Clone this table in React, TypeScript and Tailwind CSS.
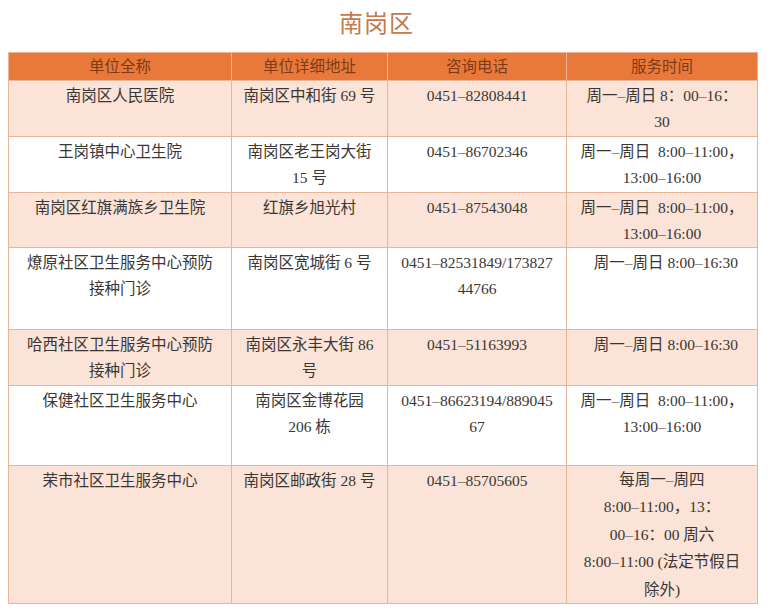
import React from "react";

type Row = { name: string[]; addr: string[]; phone: string[]; time: string[]; h: string; shade: boolean };

const rows: Row[] = [
  { name: ["南岗区人民医院"], addr: ["南岗区中和街 69 号"], phone: ["0451–82808441"], time: ["周一–周日 8：00–16：", "30"], h: "h-[56px]", shade: true },
  { name: ["王岗镇中心卫生院"], addr: ["南岗区老王岗大街", "15 号"], phone: ["0451–86702346"], time: ["周一–周日  8:00–11:00，", "13:00–16:00"], h: "h-[56px]", shade: false },
  { name: ["南岗区红旗满族乡卫生院"], addr: ["红旗乡旭光村"], phone: ["0451–87543048"], time: ["周一–周日  8:00–11:00，", "13:00–16:00"], h: "h-[55px]", shade: true },
  { name: ["燎原社区卫生服务中心预防", "接种门诊"], addr: ["南岗区宽城街 6 号"], phone: ["0451–82531849/173827", "44766"], time: ["  周一–周日 8:00–16:30"], h: "h-[82px]", shade: false },
  { name: ["哈西社区卫生服务中心预防", "接种门诊"], addr: ["南岗区永丰大街 86", "号"], phone: ["0451–51163993"], time: ["  周一–周日 8:00–16:30"], h: "h-[56px]", shade: true },
  { name: ["保健社区卫生服务中心"], addr: ["南岗区金博花园", "206 栋"], phone: ["0451–86623194/889045", "67"], time: ["周一–周日  8:00–11:00，", "13:00–16:00"], h: "h-[80px]", shade: false },
  {
    name: ["荣市社区卫生服务中心"],
    addr: ["南岗区邮政街 28 号"],
    phone: ["0451–85705605"],
    time: ["每周一–周四", "8:00–11:00，13：", "00–16：00 周六", "8:00–11:00 (法定节假日", "除外)"],
    h: "h-[138px]",
    shade: true,
  },
];

const Lines = ({ lines }: { lines: string[] }) => (
  <>
    {lines.map((l, i) => (
      <div key={i} className="whitespace-pre">
        {l}
      </div>
    ))}
  </>
);

export default function App() {
  return (
    <div className="w-[769px] h-[613px] bg-white overflow-hidden" style={{ fontFamily: '"Liberation Serif", "Noto Sans CJK SC", serif' }}>
      <h1 className="text-center text-[24px] leading-[30px] pt-[9px] pr-[16px] text-[#c47a4c] font-normal tracking-[1px]">南岗区</h1>
      <table className="mt-[13px] ml-[8px] border-collapse table-fixed text-[15.5px] text-[#3a3633]">
        <colgroup>
          <col className="w-[223px]" />
          <col className="w-[156px]" />
          <col className="w-[179px]" />
          <col className="w-[191px]" />
        </colgroup>
        <thead>
          <tr className="h-[28px] bg-[#e9793b] text-[#7e3a12]">
            {["单位全称", "单位详细地址", "咨询电话", "服务时间"].map((t) => (
              <th key={t} className="border border-[#e8b597] font-normal text-center leading-[26px] align-middle p-0">
                {t}
              </th>
            ))}
          </tr>
        </thead>
        <tbody>
          {rows.map((r, i) => (
            <tr key={i} className={`${r.h} ${r.shade ? "bg-[#fbe3d7]" : "bg-white"}`}>
              <td className="border border-[#e8b597] align-top text-center leading-[26px] pt-[2px] p-0">
                <Lines lines={r.name} />
              </td>
              <td className="border border-[#e8b597] align-top text-center leading-[26px] pt-[2px] p-0">
                <Lines lines={r.addr} />
              </td>
              <td className="border border-[#e8b597] align-top text-center leading-[26px] pt-[2px] p-0">
                <Lines lines={r.phone} />
              </td>
              <td className={`border border-[#e8b597] align-top text-center p-0 ${i === 6 ? "leading-[27.4px] pt-0" : "leading-[26px] pt-[2px]"}`}>
                <Lines lines={r.time} />
              </td>
            </tr>
          ))}
        </tbody>
      </table>
    </div>
  );
}
